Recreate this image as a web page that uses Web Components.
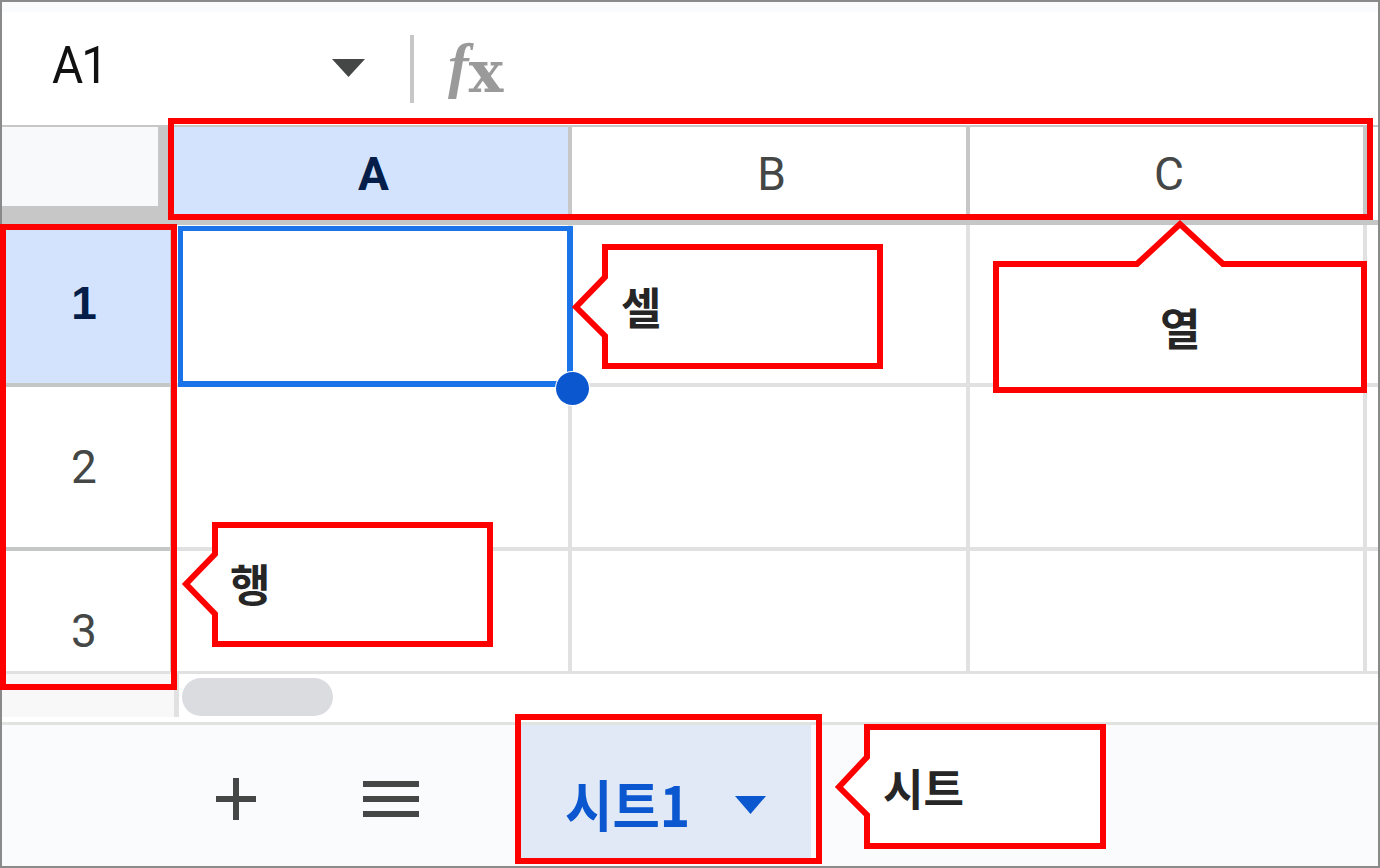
<!doctype html>
<html lang="ko">
<head>
<meta charset="utf-8">
<title>시트</title>
<style>
	html, body { margin: 0; background: #fff; }
</style>
</head>
<body>

<sheet-app>
	<formula-bar cell="A1"></formula-bar>
	<sheet-grid></sheet-grid>
	<sheet-tabs name="시트1"></sheet-tabs>

	<!-- annotations drawn over the screenshot -->
	<red-frame style="left:168px;top:118px;width:1205px;height:102px"></red-frame>
	<red-frame style="left:0;top:224px;width:177px;height:466px"></red-frame>
	<red-frame style="left:515px;top:714px;width:307px;height:150px"></red-frame>

	<red-callout style="left:566px;top:240px;width:320px;height:132px;--lx:55px;--ly:44px"
		points="605,247 880,247 880,366 605,366 605,336 576,307 605,277">셀</red-callout>
	<red-callout style="left:990px;top:216px;width:380px;height:180px;--lx:170px;--ly:89px"
		points="996,264 1137,264 1180,224 1223,264 1364,264 1364,390 996,390">열</red-callout>
	<red-callout style="left:178px;top:518px;width:318px;height:132px;--lx:52px;--ly:43px"
		points="215,525 490,525 490,644 215,644 215,614 186,584 215,554">행</red-callout>
	<red-callout style="left:830px;top:720px;width:280px;height:132px;--lx:53px;--ly:45px"
		points="867,727 1103,727 1103,846 867,846 867,815 839,787 867,757">시트</red-callout>
</sheet-app>

<script>
	class SheetApp extends HTMLElement {
		constructor() {
			super();
			this.attachShadow({ mode: 'open' }).innerHTML = `
				<style>
					:host {
						display: block;
						position: relative;
						box-sizing: border-box;
						width: 1380px;
						height: 868px;
						padding: 2px;
						background: #8a8a8a;
						overflow: hidden;
						font-family: Roboto, "Noto Sans CJK KR", sans-serif;
					}
					.inner { background: #fff; height: 864px; }
				</style>
				<div class="inner"><slot></slot></div>`;
		}
	}

	class FormulaBar extends HTMLElement {
		constructor() {
			super();
			const cell = this.getAttribute('cell');
			this.attachShadow({ mode: 'open' }).innerHTML = `
				<style>
					:host {
						display: flex;
						align-items: center;
						box-sizing: border-box;
						height: 125px;
						padding: 10px 0 0 50px;
						background: linear-gradient(#f9fbfd 10px, #fff 10px);
						border-bottom: 2px solid #c7c7c7;
					}
					.name {
						width: 280px;
						margin-bottom: 6px;
						font: 400 52px/1 Roboto, sans-serif;
						letter-spacing: -2px;
						color: #111;
						transform: scaleX(.92);
						transform-origin: left;
					}
					svg { display: block; margin-bottom: 2px; }
					.sep { width: 4px; height: 68px; margin: 0 0 0 45px; background: #c7c7c7; }
					.fx {
						margin: 0 0 2px 34px;
						white-space: nowrap;
						line-height: 1;
						color: #9a9a9a;
					}
					.fx i { font: italic 700 62px/1 "Liberation Serif", serif; vertical-align: 6px; }
					.fx b { font: 700 58px/1 "DejaVu Serif", serif; margin-left: 0; }
				</style>
				<div class="name">${cell}</div>
				<svg width="33" height="18" viewBox="0 0 33 18"><path d="M0 0H33L16.5 18Z" fill="#444746"/></svg>
				<div class="sep"></div>
				<div class="fx"><i>f</i><b>x</b></div>`;
		}
	}

	class SheetGrid extends HTMLElement {
		constructor() {
			super();
			this.attachShadow({ mode: 'open' }).innerHTML = `
				<style>
					:host { display: block; }
					.grid {
						display: grid;
						grid-template-columns: 172px 398px 398px 397px 11px;
						grid-template-rows: 98px 162px 164px 123px;
						font: 400 46px/1 Roboto, sans-serif;
						color: #444746;
					}
					.grid > div { box-sizing: border-box; }
					.corner { background: #c7c7c7; }
					.corner i { display: block; width: 156px; height: 79px; background: #f8f9fa; }
					.col {
						display: flex;
						align-items: center;
						justify-content: center;
						padding-left: 5px;
						border-right: 4px solid #c7c7c7;
						border-bottom: 5px solid #c4c7c5;
					}
					.row {
						display: flex;
						align-items: center;
						justify-content: center;
						padding-right: 4px;
						border-right: 4px solid #c7c7c7;
						border-bottom: 4px solid #c4c7c5;
					}
					.on { background: #d3e3fd; color: #041e49; font-weight: 700; }
					.row.on { font-family: "Liberation Sans", sans-serif; }
					.cell { border-right: 4px solid #e1e1e1; border-bottom: 4px solid #e1e1e1; }
					.stub { border-right: 0; }
					.last { border-bottom-width: 3px; }
					.a1 { position: relative; }
					.sel {
						position: absolute;
						left: 4px; top: 1px; right: -5px; bottom: -4px;
						border: solid #1a73e8;
						border-width: 5px 6px 6px 5px;
					}
					.handle {
						position: absolute;
						left: 382px; top: 147px;
						width: 33px; height: 33px;
						border-radius: 50%;
						background: #0b57d0;
						box-shadow: 0 0 0 1px #fff;
					}
					.scroll { display: flex; align-items: flex-start; height: 48px; }
					.track {
						width: 172px; height: 43px;
						background: #f8f8f8;
						border-right: 5px solid #e1e1e1;
					}
					.thumb {
						width: 151px; height: 38px;
						margin: 4px 0 0 3px;
						border-radius: 19px;
						background: #dadce0;
					}
				</style>
				<div class="grid">
					<div class="corner"><i></i></div>
					<div class="col on">A</div>
					<div class="col">B</div>
					<div class="col">C</div>
					<div class="cell stub" style="border-bottom:5px solid #c4c7c5"></div>

					<div class="row on" style="padding-bottom:3px">1</div>
					<div class="cell a1"><div class="sel"></div><div class="handle"></div></div>
					<div class="cell"></div>
					<div class="cell"></div>
					<div class="cell stub"></div>

					<div class="row">2</div>
					<div class="cell"></div>
					<div class="cell"></div>
					<div class="cell"></div>
					<div class="cell stub"></div>

					<div class="row last" style="padding-top:40px;border-bottom-color:#e1e1e1">3</div>
					<div class="cell last"></div>
					<div class="cell last"></div>
					<div class="cell last"></div>
					<div class="cell stub last"></div>
				</div>
				<div class="scroll">
					<div class="track"></div>
					<div class="thumb"></div>
				</div>`;
		}
	}

	class SheetTabs extends HTMLElement {
		constructor() {
			super();
			const name = this.getAttribute('name');
			this.attachShadow({ mode: 'open' }).innerHTML = `
				<style>
					:host {
						display: flex;
						align-items: flex-start;
						box-sizing: border-box;
						height: 144px;
						background: #f9fbfd;
						border-top: 3px solid #e1e3e1;
					}
					svg { display: block; flex: none; }
					.plus { margin: 53px 0 0 214px; }
					.menu { margin: 56px 0 0 107px; }
					.tab {
						display: flex;
						align-items: center;
						box-sizing: border-box;
						width: 290px;
						height: 135px;
						margin-left: 102px;
						padding: 24px 0 0 44px;
						background: #e1e9f7;
						color: #0b57d0;
					}
					.label {
						width: 170px;
						margin-bottom: 3px;
						font: 700 56px/1 "Noto Sans CJK KR", sans-serif;
						white-space: nowrap;
						transform: scaleX(.92);
						transform-origin: left;
					}
				</style>
				<svg class="plus" width="40" height="42" viewBox="0 0 40 42"><path d="M20 0V42M0 21H40" stroke="#444746" stroke-width="6"/></svg>
				<svg class="menu" width="56" height="36" viewBox="0 0 56 36"><path d="M0 3H56M0 18H56M0 33H56" stroke="#444746" stroke-width="6"/></svg>
				<div class="tab">
					<div class="label">${name}</div>
					<svg width="31" height="18" viewBox="0 0 31 18"><path d="M0 0H31L15.5 18Z" fill="#0b57d0"/></svg>
				</div>`;
		}
	}

	class RedFrame extends HTMLElement {
		constructor() {
			super();
			this.attachShadow({ mode: 'open' }).innerHTML = `
				<style>
					:host {
						position: absolute;
						box-sizing: border-box;
						border: 6px solid #f00;
						pointer-events: none;
					}
				</style>`;
		}
	}

	class RedCallout extends HTMLElement {
		constructor() {
			super();
			this.attachShadow({ mode: 'open' }).innerHTML = `
				<style>
					:host { position: absolute; display: block; }
					svg { position: absolute; left: 0; top: 0; width: 100%; height: 100%; }
					.label {
						position: absolute;
						left: var(--lx);
						top: var(--ly);
						font: 700 44px/1 "Noto Sans CJK KR", sans-serif;
						color: #262626;
						white-space: nowrap;
					}
				</style>
				<svg><polygon fill="#fff" stroke="#f00" stroke-width="6" stroke-miterlimit="10"/></svg>
				<div class="label"><slot></slot></div>`;
		}
		connectedCallback() {
			// points are given in page coordinates, the viewBox maps them onto this box
			const left = parseFloat(this.style.left), top = parseFloat(this.style.top);
			const w = parseFloat(this.style.width), h = parseFloat(this.style.height);
			const svg = this.shadowRoot.querySelector('svg');
			svg.setAttribute('viewBox', `${left} ${top} ${w} ${h}`);
			svg.querySelector('polygon').setAttribute('points', this.getAttribute('points'));
		}
	}

	customElements.define('sheet-app', SheetApp);
	customElements.define('formula-bar', FormulaBar);
	customElements.define('sheet-grid', SheetGrid);
	customElements.define('sheet-tabs', SheetTabs);
	customElements.define('red-frame', RedFrame);
	customElements.define('red-callout', RedCallout);
</script>
</body>
</html>
